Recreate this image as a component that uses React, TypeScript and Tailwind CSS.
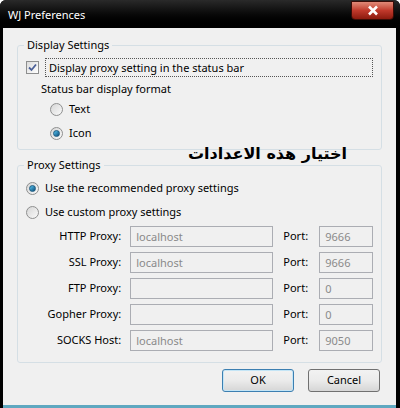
import React from 'react';

const font = { fontFamily: '"Noto Sans", "Open Sans", sans-serif' };

function Check() {
    return (
        <span className="w-[13px] h-[13px] border border-[#8e8f8f] bg-gradient-to-br from-[#dcdcdc] to-white flex items-center justify-center shrink-0">
            <svg width="9" height="9" viewBox="0 0 9 9">
                <path d="M1 4.5 L3.5 7 L8 1.5" stroke="#4a5f97" strokeWidth="1.8" fill="none" />
            </svg>
        </span>
    );
}

function Radio({ on }: { on?: boolean }) {
    return (
        <span className="w-[13px] h-[13px] rounded-full border border-[#8e8f8f] bg-gradient-to-br from-[#d6d6d6] to-[#fafafa] flex items-center justify-center shrink-0">
            {on && <span className="w-[7px] h-[7px] rounded-full bg-gradient-to-br from-[#58c5f0] to-[#0c4f7c] border border-[#1c5a80]" />}
        </span>
    );
}

const rows = [
    { label: 'HTTP Proxy:', host: 'localhost', port: '9666' },
    { label: 'SSL Proxy:', host: 'localhost', port: '9666' },
    { label: 'FTP Proxy:', host: '', port: '0' },
    { label: 'Gopher Proxy:', host: '', port: '0' },
    { label: 'SOCKS Host:', host: 'localhost', port: '9050' },
];

export default function App() {
    return (
        <div className="w-[400px] h-[408px] bg-black rounded-t-[6px] flex flex-col text-[11px] text-black overflow-hidden" style={font}>
            <div className="h-[28px] flex items-start justify-between shrink-0 bg-gradient-to-b from-[#2a2a2a] to-black">
                <span className="text-white text-[11px] pl-[8px] pt-[7px]">WJ Preferences</span>
                <div className="mr-[6px] mt-[1px] w-[43px] h-[19px] rounded-b-[4px] border border-[#3a0c06] bg-gradient-to-b from-[#e08a78] via-[#c0392b] to-[#8c1a0e] flex items-center justify-center">
                    <svg width="12" height="11" viewBox="0 0 12 11">
                        <path d="M2 1.5 L10 9.5 M10 1.5 L2 9.5" stroke="white" strokeWidth="2.6" />
                    </svg>
                </div>
            </div>
            <div className="flex-1 mx-[3px] mr-[4px] bg-[#f0f0f0] border-b-[3px] border-[#5fa8c0] flex flex-col px-[14px] pt-[10px]">
                <fieldset className="border border-[#d5dfe5] rounded-[3px] px-[8px] pb-[8px] pt-[2px] m-0 min-w-0">
                    <legend className="px-[3px] ml-[-2px] leading-[14px]">Display Settings</legend>
                    <div className="flex items-center gap-[6px] mt-[4px]">
                        <Check />
                        <span className="flex-1 border border-dotted border-[#555] px-[3px] py-[1px] leading-[15px]">Display proxy setting in the status bar</span>
                    </div>
                    <div className="pl-[15px] mt-[4px] leading-[16px]">Status bar display format</div>
                    <div className="pl-[24px] flex items-center gap-[6px] mt-[4px] leading-[16px]"><Radio />Text</div>
                    <div className="pl-[24px] flex items-center gap-[6px] mt-[8px] leading-[16px]"><Radio on />Icon</div>
                </fieldset>
                <div className="h-0 relative">
                    <span className="absolute left-[171px] top-[-7px] text-[16px] font-bold leading-[22px] whitespace-nowrap" style={{ fontFamily: '"DejaVu Sans", sans-serif' }} dir="rtl">اختيار هذه الاعدادات</span>
                </div>
                <fieldset className="border border-[#d5dfe5] rounded-[3px] px-[8px] pb-[11px] pt-[2px] m-0 mt-[8px] min-w-0">
                    <legend className="px-[3px] ml-[-2px] leading-[14px]">Proxy Settings</legend>
                    <div className="flex items-center gap-[6px] mt-[6px] leading-[16px]"><Radio on />Use the recommended proxy settings</div>
                    <div className="flex items-center gap-[6px] mt-[8px] leading-[16px]"><Radio />Use custom proxy settings</div>
                    <div className="flex flex-col gap-[5px] mt-[6px]">
                        {rows.map((r) => (
                            <div key={r.label} className="flex items-center h-[21px]">
                                <span className="w-[107px] text-right pr-[9px]">{r.label}</span>
                                <span className="w-[147px] h-[21px] border border-[#abadb3] px-[5px] leading-[19px] text-[#8a8a8a]">{r.host}</span>
                                <span className="ml-[10px] w-[37px]">Port:</span>
                                <span className="w-[55px] h-[21px] border border-[#abadb3] px-[5px] leading-[19px] text-[#8a8a8a]">{r.port}</span>
                            </div>
                        ))}
                    </div>
                </fieldset>
                <div className="flex justify-end gap-[14px] mt-[6px] pr-[2px]">
                    <button className="w-[72px] h-[23px] rounded-[3px] border border-[#3c7fb1] bg-gradient-to-b from-[#f2f2f2] via-[#ebebeb] to-[#d6d6d6] shadow-[inset_0_0_0_1px_#c4e5f6]">OK</button>
                    <button className="w-[72px] h-[23px] rounded-[3px] border border-[#707070] bg-gradient-to-b from-[#f2f2f2] via-[#ebebeb] to-[#d6d6d6]">Cancel</button>
                </div>
            </div>
        </div>
    );
}
